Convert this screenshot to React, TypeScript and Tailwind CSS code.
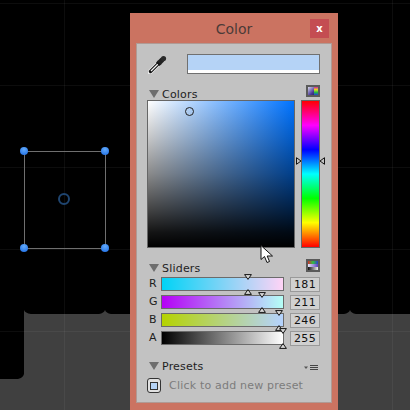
import React from "react";

const font = "font-['DejaVu_Sans',sans-serif]";

function Caret() {
  return (
    <svg width="10" height="8" viewBox="0 0 10 8" className="shrink-0">
      <path d="M0 0H10L5 8Z" fill="#6e6e6e" />
    </svg>
  );
}

function Header({ label }: { label: string }) {
  return (
    <div className="flex items-center gap-[3px] pl-[2px] h-[15px] pt-[3px]">
      <Caret />
      <span className="text-[11px] leading-[13px] text-[#1e1e1e] tracking-[0.2px]">{label}</span>
    </div>
  );
}

function Eyedropper() {
  return (
    <svg width="20" height="20" viewBox="0 0 20 20" className="shrink-0">
      <path d="M2 18 L10.5 9.5" stroke="#eee" strokeWidth="5" strokeLinecap="round" />
      <path d="M2.5 17.5 L10.5 9.5" stroke="#111" strokeWidth="3.4" strokeLinecap="round" />
      <path d="M3 17 L10 10" stroke="#f4f4f4" strokeWidth="1.3" />
      <path d="M9 7.5 L12.5 11" stroke="#151515" strokeWidth="2.8" />
      <path d="M11 9 L14.5 5.5" stroke="#222" strokeWidth="5" />
      <circle cx="15.5" cy="4.5" r="2.6" fill="#2a2a2a" />
    </svg>
  );
}

function Marker({ value, up }: { value: number; up: boolean }) {
  return (
    <svg
      width="8"
      height="6"
      viewBox="0 0 8 6"
      className={`absolute ${up ? "top-[11px]" : "top-[-4px]"}`}
      style={{ left: Math.round((value / 255) * 122) - 5.5 }}
    >
      <path d={up ? "M4 .6 L7.4 5.4 H.6 Z" : "M.6 .6 H7.4 L4 5.4 Z"} fill="#d8d8d8" stroke="#111" strokeWidth="1" />
    </svg>
  );
}

const rows = [
  { label: "R", value: 181, bar: "bg-[linear-gradient(to_right,#00d3f6,#ffd3f6)]" },
  { label: "G", value: 211, bar: "bg-[linear-gradient(to_right,#b500f6,#b5fff6)]" },
  { label: "B", value: 246, bar: "bg-[linear-gradient(to_right,#b5d300,#b5d3ff)]" },
  { label: "A", value: 255, bar: "bg-[linear-gradient(to_right,#000000,#ffffff)]" },
];

function SliderRow({ label, value, bar }: { label: string; value: number; bar: string }) {
  return (
    <div className="flex items-center h-[14px] pl-[2px]">
      <span className="w-[12px] text-[11px] leading-[14px] text-[#1e1e1e]">{label}</span>
      <div className={`relative w-[123px] h-[14px] border border-[#6b6b6b] ${bar}`}>
        <Marker value={value} up={false} />
        <Marker value={value} up={true} />
      </div>
      <div className="ml-[6px] w-[30px] h-[15px] border border-[#9a9a9a] bg-[#d0d0d0] text-center text-[11px] leading-[13px] tracking-[0.3px] text-[#111]">
        {value}
      </div>
    </div>
  );
}

function ColorsIcon() {
  return (
    <div className="ml-auto mr-[1px] w-[14px] h-[12px] border-2 border-[#5a5a5a] flex bg-[linear-gradient(135deg,#d8d8e8,#4b3a9a_55%,#181828)]">
      <div className="ml-auto w-[4px] h-full bg-[linear-gradient(to_bottom,#d020a0,#e8d820,#20c040,#2040e0)]" />
    </div>
  );
}

function SlidersIcon() {
  return (
    <div className="ml-auto mr-[1px] w-[14px] h-[13px] border-2 border-[#5a5a5a] flex flex-col">
      <div className="h-1/3 bg-[linear-gradient(to_right,#d03030,#30c040,#3040d0)]" />
      <div className="h-1/3 bg-[linear-gradient(to_right,#e8e8f8,#6040c0)]" />
      <div className="h-1/3 bg-[linear-gradient(to_right,#111,#eee)]" />
    </div>
  );
}

function Handle({ className }: { className: string }) {
  return (
    <div className={`absolute w-[8px] h-[8px] rounded-full bg-[radial-gradient(circle_at_50%_30%,#62aafa,#1a6ae4)] ${className}`} />
  );
}

export default function App() {
  return (
    <div className={`relative w-[410px] h-[410px] overflow-hidden bg-black ${font}`}>
      {/* scene: ground silhouette */}
      <div className="absolute left-0 top-[379px] w-[410px] h-[31px] bg-[#404040]" />
      <div className="absolute left-[24px] top-[314px] w-[386px] h-[70px] bg-[#404040]" />
      <svg className="absolute left-0 top-0" width="410" height="410" viewBox="0 0 410 410">
        <path d="M24 314V310Q25 313 31 314Z M99 314Q104 313 105 310Q106 313 111 314Z M344 314Q349 313 350 310Q351 313 356 314Z M18 379Q23 378 24 374V379Z" fill="#404040" />
      </svg>
      {/* scene: faint grid */}
      <svg className="absolute left-0 top-0" width="410" height="410" viewBox="0 0 410 410">
        <path d="M64.5 0V410M392.5 0V410M0 167.5H130M0 249.5H130M0 331.5H130M338 167.5H410M338 249.5H410M338 331.5H410M338 85.5H410M0 85.5H130M0 3.5H410" stroke="#fff" strokeOpacity="0.05" fill="none" />
      </svg>
      {/* scene: selected rect */}
      <div className="absolute left-[24px] top-[151px] w-[82px] h-[98px] border border-[#6f6f6f]" />
      <Handle className="left-[20px] top-[147px]" />
      <Handle className="left-[101px] top-[147px]" />
      <Handle className="left-[20px] top-[244px]" />
      <Handle className="left-[101px] top-[244px]" />
      <div className="absolute left-[58px] top-[193px] w-[12px] h-[12px] rounded-full border-2 border-[#1f4570]" />

      {/* Color window */}
      <div className="absolute left-[130px] top-[13px] w-[208px] h-[397px] bg-[#cb7361] flex flex-col">
        <div className="relative h-[30px] shrink-0 flex items-center justify-center pt-[2px]">
          <span className="text-[14px] leading-[16px] text-[#4b3b38]">Color</span>
          <div className="absolute right-[9px] top-[6px] w-[19px] h-[19px] bg-[#c44d52] flex items-center justify-center text-white text-[10px] leading-none font-bold">x</div>
        </div>
        <div className="mx-[6px] h-[360px] bg-[#c2c2c2] border border-[#b09a94] flex flex-col px-[10px]">
          <div className="flex items-center h-[20px] mt-[10px]">
            <div className="w-[40px] flex pl-[1px]">
              <Eyedropper />
            </div>
            <div className="w-[133px] h-[20px] border border-[#707070] flex flex-col">
              <div className="flex-1 bg-[#b5d3f6]" />
              <div className="h-[3px] bg-white" />
            </div>
          </div>

          <div className="mt-[11px] flex items-start h-[15px]">
            <Header label="Colors" />
            <ColorsIcon />
          </div>

          <div className="flex gap-[6px] h-[148px]">
            <div className="relative w-[148px] h-full border border-[#666] bg-[linear-gradient(to_bottom,rgba(0,0,0,0),rgba(0,0,0,0.22)_25%,rgba(0,0,0,0.46)_50%,rgba(0,0,0,0.74)_75%,rgba(0,0,0,0.92)_90%,#000),linear-gradient(to_right,#fff,#0073ff)]">
              <div className="absolute left-[37px] top-[6px] w-[9px] h-[9px] rounded-full border border-[#222]" />
            </div>
            <div className="relative w-[19px] h-full border border-[#666] bg-[linear-gradient(to_bottom,#ff0000,#ff00ff_16.67%,#0000ff_33.33%,#00ffff_50%,#00ff00_66.67%,#ffff00_83.33%,#ff0000)]">
              <svg className="absolute left-[-6px] top-[56px]" width="6" height="8" viewBox="0 0 6 8">
                <path d="M.5 .7V7.3L5 4Z" fill="#c2c2c2" stroke="#111" />
              </svg>
              <svg className="absolute right-[-6px] top-[56px]" width="6" height="8" viewBox="0 0 6 8">
                <path d="M5.5 .7V7.3L1 4Z" fill="#c2c2c2" stroke="#111" />
              </svg>
            </div>
          </div>

          <div className="mt-[11px] flex items-start h-[15px]">
            <Header label="Sliders" />
            <SlidersIcon />
          </div>

          <div className="mt-[3px] flex flex-col gap-[4px]">
            {rows.map((r) => (
              <SliderRow key={r.label} {...r} />
            ))}
          </div>

          <div className="mt-[12px] flex items-end h-[15px]">
            <Header label="Presets" />
            <svg className="ml-auto mr-[2px] mb-[1px]" width="15" height="7" viewBox="0 0 15 7">
              <path d="M0 2.5H4L2 5Z" fill="#555" />
              <path d="M6 1.5H14M6 3.5H14M6 5.5H14" stroke="#444" />
            </svg>
          </div>

          <div className="mt-[6px] flex items-center gap-[8px]">
            <div className="w-[14px] h-[15px] rounded-[3px] border border-[#333] bg-[#e0e0e0] flex items-center justify-center">
              <div className="w-[8px] h-[8px] border border-[#333] bg-[#b5d3f6]" />
            </div>
            <span className="text-[11px] leading-[13px] tracking-[0.2px] text-[#7c7c7c]">Click to add new preset</span>
          </div>
        </div>
      </div>

      {/* mouse cursor */}
      <svg className="absolute left-[260px] top-[245px]" width="14" height="19" viewBox="0 0 14 19">
        <path d="M1 .5V14.5L4.5 11.5L7 17.5L9.5 16.5L7.2 11H12.5Z" fill="#fff" stroke="#111" strokeWidth="1" strokeLinejoin="round" />
      </svg>
    </div>
  );
}
